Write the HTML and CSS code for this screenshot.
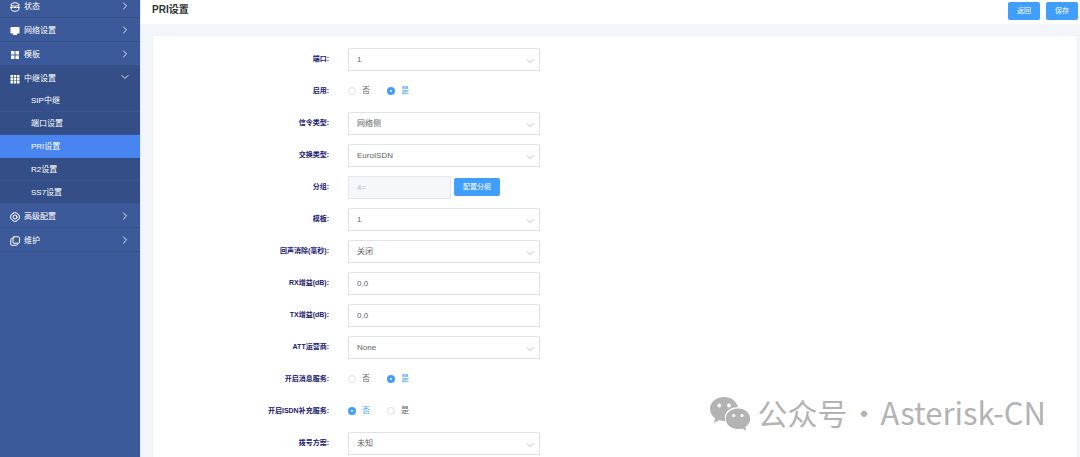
FILE: index.html
```html
<!DOCTYPE html>
<html lang="zh-CN">
<head>
<meta charset="utf-8">
<title>PRI设置</title>
<link rel="stylesheet" href="styles.css">
</head>
<body>
<div class="app">
  <nav class="sidebar">
    <a class="item" href="#"><svg class="icon" viewBox="0 0 20 20"><ellipse cx="10" cy="5" rx="7.5" ry="3.5"/><path d="M2.500 5v10c0 2 3.300 3.500 7.500 3.500s7.500-1.500 7.500-3.500V5M1 11h5M8 11h4M14 11h5"/></svg><span class="name">状态</span><svg class="chev" viewBox="0 0 8 8"><path d="M2.500 1l3 3-3 3"/></svg></a>
    <a class="item" href="#"><svg class="icon solid" viewBox="0 0 20 20"><path d="M2 2h16a1 1 0 0 1 1 1v11a1 1 0 0 1-1 1H2a1 1 0 0 1-1-1V3a1 1 0 0 1 1-1zM6 15h8v3H6z"/></svg><span class="name">网络设置</span><svg class="chev" viewBox="0 0 8 8"><path d="M2.500 1l3 3-3 3"/></svg></a>
    <a class="item" href="#"><svg class="icon solid" viewBox="0 0 20 20"><path d="M2 2h7v7H2zM11 2h7v7h-7zM2 11h7v7H2zM11 11h7v7h-7z"/></svg><span class="name">模板</span><svg class="chev" viewBox="0 0 8 8"><path d="M2.500 1l3 3-3 3"/></svg></a>
    <div class="group">
      <a class="item open" href="#"><svg class="icon solid" viewBox="0 0 20 20"><path d="M1 2h5v5H1zM7.500 2h5v5h-5zM14 2h5v5h-5zM1 8h5v5H1zM7.500 8h5v5h-5zM14 8h5v5h-5zM1 14h5v5H1zM7.500 14h5v5h-5zM14 14h5v5h-5z"/></svg><span class="name">中继设置</span><svg class="chev" viewBox="0 0 8 8"><path d="M1 2.500l3 3 3-3"/></svg></a>
      <a class="sub" href="#">SIP中继</a>
      <a class="sub" href="#">端口设置</a>
      <a class="sub active" href="#">PRI设置</a>
      <a class="sub" href="#">R2设置</a>
      <a class="sub" href="#">SS7设置</a>
    </div>
    <a class="item" href="#"><svg class="icon" viewBox="0 0 20 20"><path d="M7 1.500h6l1.500 2.500 3 1 1.500 5-1.500 5-3 1-1.500 2.500H7L5.500 16l-3-1L1 10l1.500-5 3-1z"/><circle cx="10" cy="10" r="4"/></svg><span class="name">高级配置</span><svg class="chev" viewBox="0 0 8 8"><path d="M2.500 1l3 3-3 3"/></svg></a>
    <a class="item" href="#"><svg class="icon" viewBox="0 0 20 20"><rect x="6" y="1.500" width="13" height="13" rx="2"/><path d="M6 5H3.500a2 2 0 0 0-2 2v9.500a2 2 0 0 0 2 2H13a2 2 0 0 0 2-2v-2"/></svg><span class="name">维护</span><svg class="chev" viewBox="0 0 8 8"><path d="M2.500 1l3 3-3 3"/></svg></a>
  </nav>
  <div class="content">
    <header class="topbar">
      <h1 class="title">PRI设置</h1>
      <button class="btn" type="button">返回</button>
      <button class="btn" type="button">保存</button>
    </header>
    <main class="main">
      <form class="card">
        <div class="row"><label class="label" for="port">端口:</label><div class="select"><select class="control" id="port"><option>1</option></select><svg class="arrow" viewBox="0 0 8 8"><path d="M1 2.500l3 3 3-3"/></svg></div></div>
        <div class="row" role="radiogroup" aria-labelledby="l-on"><span class="label" id="l-on">启用:</span><label class="option"><input class="radio" type="radio" name="on"><span>否</span></label><label class="option"><input class="radio" type="radio" name="on" checked><span>是</span></label></div>
        <div class="row"><label class="label" for="signal">信令类型:</label><div class="select"><select class="control" id="signal"><option>网络侧</option></select><svg class="arrow" viewBox="0 0 8 8"><path d="M1 2.500l3 3 3-3"/></svg></div></div>
        <div class="row"><label class="label" for="switch">交换类型:</label><div class="select"><select class="control" id="switch"><option>EuroISDN</option></select><svg class="arrow" viewBox="0 0 8 8"><path d="M1 2.500l3 3 3-3"/></svg></div></div>
        <div class="row"><label class="label" for="grp">分组:</label><div class="pair"><input class="control" id="grp" type="text" value="4=" disabled><button class="btn wide" type="button">配置分组</button></div></div>
        <div class="row"><label class="label" for="tpl">模板:</label><div class="select"><select class="control" id="tpl"><option>1</option></select><svg class="arrow" viewBox="0 0 8 8"><path d="M1 2.500l3 3 3-3"/></svg></div></div>
        <div class="row"><label class="label" for="echo">回声消除(毫秒):</label><div class="select"><select class="control" id="echo"><option>关闭</option></select><svg class="arrow" viewBox="0 0 8 8"><path d="M1 2.500l3 3 3-3"/></svg></div></div>
        <div class="row"><label class="label" for="rx">RX增益(dB):</label><div class="select"><input class="control" id="rx" type="text" value="0.0"></div></div>
        <div class="row"><label class="label" for="tx">TX增益(dB):</label><div class="select"><input class="control" id="tx" type="text" value="0.0"></div></div>
        <div class="row"><label class="label" for="att">ATT运营商:</label><div class="select"><select class="control" id="att"><option>None</option></select><svg class="arrow" viewBox="0 0 8 8"><path d="M1 2.500l3 3 3-3"/></svg></div></div>
        <div class="row" role="radiogroup" aria-labelledby="l-msg"><span class="label" id="l-msg">开启消息服务:</span><label class="option"><input class="radio" type="radio" name="msg"><span>否</span></label><label class="option"><input class="radio" type="radio" name="msg" checked><span>是</span></label></div>
        <div class="row" role="radiogroup" aria-labelledby="l-sup"><span class="label" id="l-sup">开启ISDN补充服务:</span><label class="option"><input class="radio" type="radio" name="sup" checked><span>否</span></label><label class="option"><input class="radio" type="radio" name="sup"><span>是</span></label></div>
        <div class="row"><label class="label" for="dial">拨号方案:</label><div class="select"><select class="control" id="dial"><option>未知</option></select><svg class="arrow" viewBox="0 0 8 8"><path d="M1 2.500l3 3 3-3"/></svg></div></div>
      </form>
    </main>
  </div>
</div>
<div class="watermark">
  <svg class="wechat" viewBox="0 0 42 36"><path fill="#b3b3b3" d="M15 1C7 1 1 6.300 1 13c0 4 2 7 5.200 9.200L5 27l5-2.800c1.600.5 3.300.8 5 .8h1.200C14 17.500 20 11 29 11.300 27.500 5 22 1 15 1z"/><path fill="#b3b3b3" d="M29 12.500c-7 0-12.300 4.600-12.300 10.300S22 33 29 33c1.400 0 2.800-.2 4-.6l4.300 2.300-1-3.800c3-2 4.900-4.800 4.900-8.100 0-5.700-5.200-10.300-12.200-10.300z"/><g fill="#fff"><circle cx="10.300" cy="9.500" r="1.900"/><circle cx="20" cy="9.500" r="1.900"/><circle cx="24.700" cy="19.500" r="1.600"/><circle cx="33" cy="19.500" r="1.600"/></g></svg>
  <span class="cn">公众号</span><span class="dot">·</span><span class="en">Asterisk-CN</span>
</div>
</body>
</html>
```
FILE: styles.css
```css
* { box-sizing: border-box; }
body {
  margin: 0;
  height: 100vh;
  overflow: hidden;
  font: 8px/12px "Liberation Sans", "Noto Sans CJK SC", sans-serif;
  color: #606266;
  background: #f2f6fa;
}
a { color: inherit; text-decoration: none; }
svg { flex: none; fill: none; stroke-linecap: round; stroke-linejoin: round; }

.app { display: flex; height: 100%; }
.sidebar {
  flex: none;
  width: 140px;
  margin-top: -6px;
  background: #3c5a99;
  color: #fff;
}
.item {
  display: flex;
  align-items: center;
  gap: 4px;
  height: 24px;
  padding: 3px 11px 0 10px;
  border-bottom: 1px solid #34508a;
}
.group { background: #344f87; }
.open { height: 23px; }
.name { flex: 1; }
.icon { width: 10px; height: 10px; stroke: #fff; stroke-width: 2; }
.solid { fill: #fff; stroke: none; }
.chev { width: 8px; height: 8px; margin-bottom: 3px; stroke: #dfe6f3; stroke-width: 1; }
.sub {
  display: flex;
  align-items: center;
  height: 23px;
  padding: 2px 0 0 31px;
  border-bottom: 1px solid #385491;
}
.active { background: #4885f0; border-color: #4885f0; }

.content {
  flex: 1;
  min-width: 0;
  display: flex;
  flex-direction: column;
  border-left: 1px solid #e6e9ee;
}
.topbar {
  display: flex;
  align-items: center;
  gap: 6px;
  height: 24px;
  flex: none;
  padding: 0 2px 2px 11px;
  background: #fff;
}
.title { flex: 1; margin: 0; padding-bottom: 2px; font-size: 10px; line-height: 16px; color: #303133; }
.btn {
  height: 18px;
  width: 32px;
  padding: 0;
  border: 0;
  border-radius: 2px;
  background: #409eff;
  color: #fff;
  font: inherit;
  font-size: 7px;
}
.main { flex: 1; padding: 11px 2px 0 11px; }
.card {
  display: flex;
  flex-direction: column;
  gap: 8px;
  min-height: 100%;
  padding: 11px 0;
  border: 1px solid #edf0f5;
  border-radius: 3px;
  background: #fff;
}
.row { display: flex; align-items: center; flex: none; height: 24px; }
.label {
  width: 176px;
  margin-right: 19px;
  font-size: 7px;
  font-weight: bold;
  text-align: right;
  color: #191970;
}
.select { position: relative; width: 192px; }
.control {
  display: block;
  width: 100%;
  height: 23px;
  margin: 0;
  padding: 1px 8px 0;
  border: 1px solid #dfe3ea;
  border-radius: 0;
  appearance: none;
  background: #fff;
  color: #606266;
  font: inherit;
}
.control:disabled { background: #f5f7fa; border-color: #e4e7ed; color: #b4b8c0; opacity: 1; }
.arrow {
  position: absolute;
  right: 6px;
  top: 9px;
  width: 8px;
  height: 8px;
  stroke: #c0c4cc;
  stroke-width: 1;
  pointer-events: none;
}
.pair { display: flex; align-items: center; gap: 3px; width: 152px; }
.pair .control { flex: 1; min-width: 0; }
.wide { width: 46px; }
.option { display: flex; align-items: center; gap: 6px; margin-right: 17px; }
.radio {
  width: 8px;
  height: 8px;
  margin: 0;
  appearance: none;
  border: 1px solid #dcdfe6;
  border-radius: 50%;
  background: #fff;
}
.radio:checked { border: 3px solid #409eff; }
.radio:checked + span { color: #409eff; }

.watermark {
  position: absolute;
  right: 34px;
  bottom: 21px;
  display: flex;
  align-items: center;
  color: #b3b3b3;
  font: 30px/40px "Noto Sans CJK SC", sans-serif;
}
.watermark span { padding-bottom: 4px; }
.wechat { width: 42px; height: 36px; margin-right: 7px; }
.dot { width: 33px; text-align: center; }
.en { font-size: 31px; }
```
